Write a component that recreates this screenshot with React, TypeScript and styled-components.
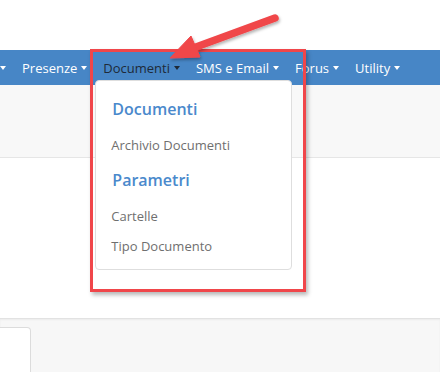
import React from "react";
import styled, { createGlobalStyle } from "styled-components";

const GlobalStyle = createGlobalStyle`
  html, body {
    margin: 0;
    padding: 0;
    background: #ffffff;
  }
  body {
    font-family: "Open Sans", "Noto Sans", sans-serif;
    -webkit-font-smoothing: antialiased;
  }
  * {
    box-sizing: border-box;
  }
`;

const Page = styled.div`
  position: relative;
  width: 440px;
  height: 372px;
  overflow: hidden;
  background: #ffffff;
  display: flex;
  flex-direction: column;
`;

const TopSpace = styled.div`
  height: 50px;
  flex: none;
`;

const Navbar = styled.nav`
  height: 35px;
  flex: none;
  background: #4786c6;
  display: flex;
  align-items: center;
`;

const NavList = styled.ul`
  list-style: none;
  margin: 0;
  padding: 0;
  display: flex;
  align-items: center;
  height: 100%;
`;

const NavItem = styled.li`
  position: relative;
  height: 100%;
  display: flex;
  align-items: center;
`;

const NavLink = styled.a<{ $active?: boolean; $edge?: boolean }>`
  display: flex;
  align-items: center;
  height: 100%;
  padding: ${(p) => (p.$edge ? "0 8px 0 0" : "0 8px")};
  font-size: 13px;
  color: ${(p) => (p.$active ? "#1e2a38" : "#ffffff")};
  text-decoration: none;
  white-space: nowrap;
  cursor: pointer;
`;

const Caret = styled.span<{ $bare?: boolean }>`
  display: inline-block;
  width: 0;
  height: 0;
  margin-left: ${(p) => (p.$bare ? "0" : "4px")};
  border-top: 4px solid currentColor;
  border-left: 3.5px solid transparent;
  border-right: 3.5px solid transparent;
`;

const SubBar = styled.div`
  height: 73px;
  flex: none;
  background: #f8f8f8;
  border-bottom: 1px solid #e6e6e6;
`;

const Content = styled.div`
  height: 160px;
  flex: none;
  background: #ffffff;
`;

const Footer = styled.div`
  flex: 1;
  background: #f7f7f7;
  border-top: 1px solid #e2e2e2;
  box-shadow: inset 0 1px 2px rgba(0, 0, 0, 0.05);
  padding-top: 8px;
`;

const Card = styled.div`
  width: 31px;
  height: 100px;
  background: #ffffff;
  border: 1px solid #dcdcdc;
  border-left: none;
  border-top-right-radius: 4px;
`;

const Menu = styled.div`
  position: absolute;
  top: 30px;
  left: 0;
  width: 197px;
  background: #ffffff;
  border: 1px solid #dedede;
  border-radius: 4px;
  padding: 14px 0 8px;
  z-index: 5;
`;

const MenuHeader = styled.div<{ $spaced?: boolean }>`
  height: 28px;
  line-height: 28px;
  padding-left: 16px;
  margin-top: ${(p) => (p.$spaced ? "6px" : "0")};
  margin-bottom: 7px;
  font-size: 16px;
  font-weight: 600;
  color: #4a89cc;
`;

const MenuItem = styled.a`
  display: block;
  height: 30px;
  line-height: 30px;
  padding-left: 15px;
  font-size: 13px;
  color: #6f6f6f;
  text-decoration: none;
  white-space: nowrap;
`;

const Highlight = styled.div`
  position: absolute;
  left: 90px;
  top: 49px;
  width: 216px;
  height: 243px;
  border: 3px solid #f0464a;
  box-shadow: 2px 3px 4px rgba(0, 0, 0, 0.28);
  z-index: 6;
  pointer-events: none;
`;

const ArrowLayer = styled.svg`
  position: absolute;
  left: 150px;
  top: 0;
  z-index: 7;
  overflow: visible;
  pointer-events: none;
`;

const navItems = ["Presenze", "Documenti", "SMS e Email", "Forus", "Utility"];

export default function App() {
  return (
    <>
      <GlobalStyle />
      <Page>
        <TopSpace />
        <Navbar>
          <NavList>
            <NavItem>
              <NavLink $edge>
                <Caret $bare />
              </NavLink>
            </NavItem>
            {navItems.map((label) => (
              <NavItem key={label}>
                <NavLink $active={label === "Documenti"}>
                  {label}
                  <Caret />
                </NavLink>
                {label === "Documenti" && (
                  <Menu>
                    <MenuHeader>Documenti</MenuHeader>
                    <MenuItem>Archivio Documenti</MenuItem>
                    <MenuHeader $spaced>Parametri</MenuHeader>
                    <MenuItem>Cartelle</MenuItem>
                    <MenuItem>Tipo Documento</MenuItem>
                  </Menu>
                )}
              </NavItem>
            ))}
          </NavList>
        </Navbar>
        <SubBar />
        <Content />
        <Footer>
          <Card />
        </Footer>

        {/* annotation */}
        <Highlight />
        <ArrowLayer width="140" height="70" viewBox="0 0 140 70">
          <defs>
            <filter id="arrowShadow" x="-20%" y="-40%" width="140%" height="180%">
              <feDropShadow dx="1" dy="2" stdDeviation="1.5" floodColor="#000" floodOpacity="0.3" />
            </filter>
          </defs>
          <g filter="url(#arrowShadow)" fill="#f0464a" stroke="#f0464a">
            <line x1="125" y1="18" x2="46" y2="47" strokeWidth="7.5" strokeLinecap="round" />
            <polygon points="20,58 41,36 50,57" strokeWidth="1" strokeLinejoin="round" />
          </g>
        </ArrowLayer>
      </Page>
    </>
  );
}
